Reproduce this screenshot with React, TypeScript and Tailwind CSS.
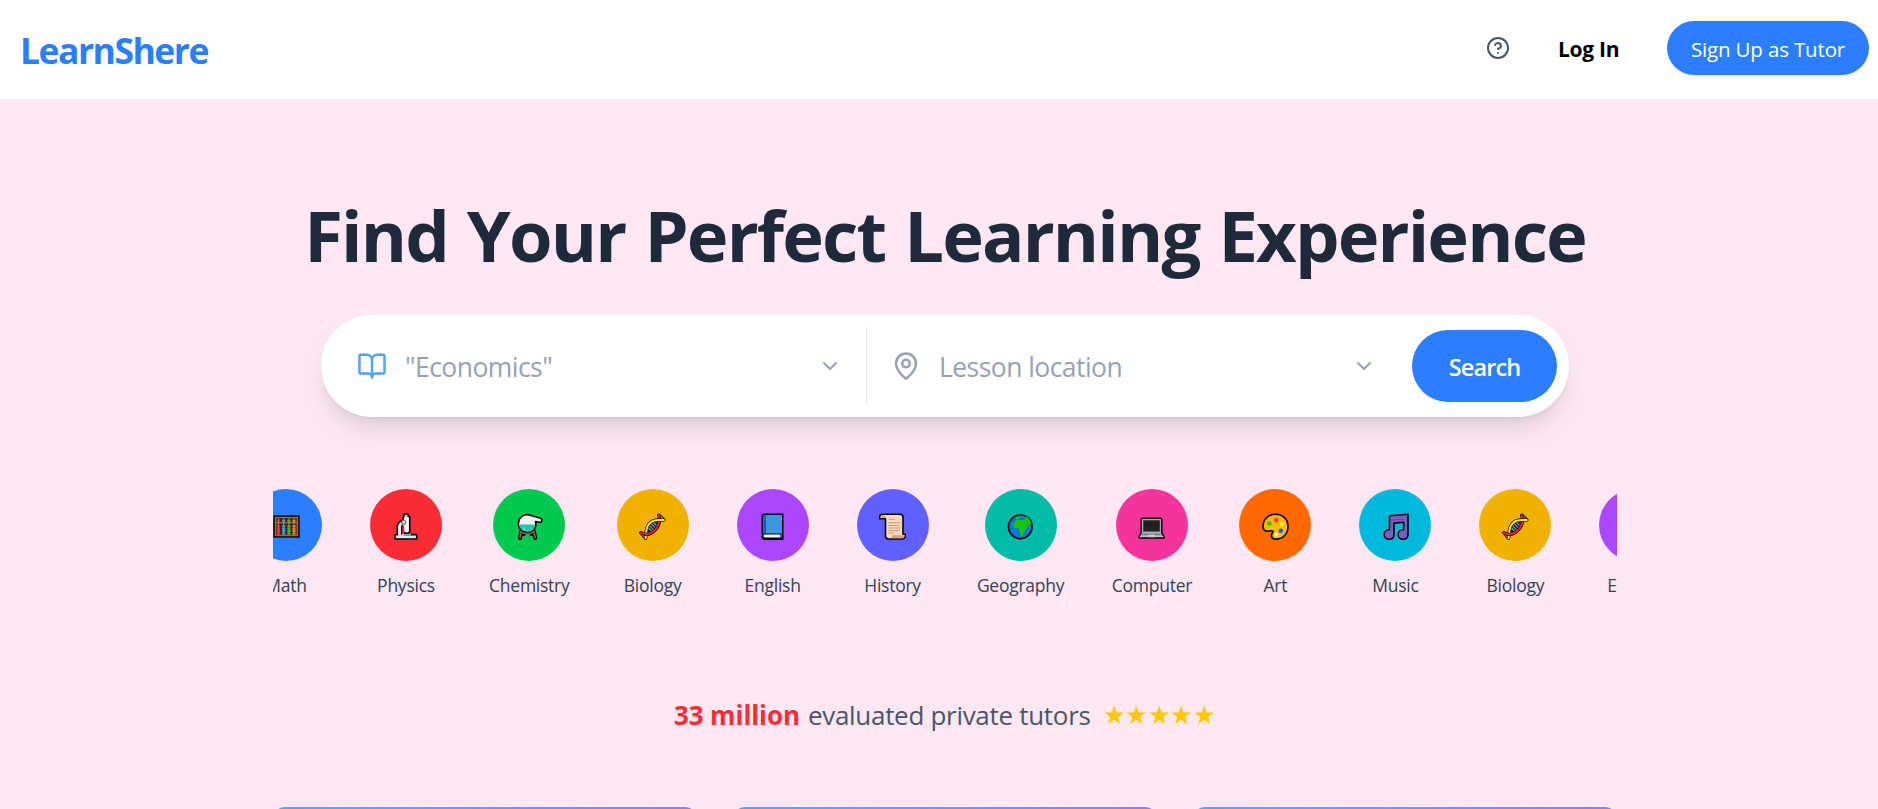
import React from "react";
import { BookOpen, MapPin, ChevronDown, CircleHelp } from "lucide-react";

const Abacus = () => (
  <svg width="27" height="27" viewBox="0 0 27 27">
    <rect x="0.3" y="2.3" width="26.4" height="22.4" fill="#0b0808" />
    <rect x="1.8" y="3.8" width="23.4" height="19.4" fill="#9a6a48" />
    <rect x="3.2" y="5.2" width="20.4" height="3.8" fill="#3a231a" />
    <rect x="3.2" y="10.4" width="20.4" height="11.4" fill="#3a231a" />
    <path d="M5.400 5.200v16.600M10.700 5.200v16.600M15.900 5.200v16.600M21 5.200v16.600" stroke="#d9b48f" strokeWidth=".7" />
    <path d="M5.4 6.800v2.200M5.400 12.300v9.500" stroke="#f0303f" strokeWidth="3.200" strokeDasharray="2 .4" />
    <path d="M10.700 6.800v2.200M10.700 12.300v9.500" stroke="#3b9ef0" strokeWidth="3.200" strokeDasharray="2 .4" />
    <path d="M15.900 6.800v2.200M15.900 12.300v9.500" stroke="#3bbf34" strokeWidth="3.200" strokeDasharray="2 .4" />
    <path d="M21 6.800v2.200M21 12.300v9.500" stroke="#f5812a" strokeWidth="3.200" strokeDasharray="2 .4" />
  </svg>
);

const Microscope = () => (
  <svg width="27" height="27" viewBox="0 0 27 27" strokeLinejoin="round">
    <path d="M11 1.2h4.200v2.200h1.600v15.400l-1.800 1.400h-2.600l-1-1v2.400H23.700v4.400H2v-4.400h2.400v-8.200C4.400 11 6.400 8.600 9 7.600l1.200-.6V3.400h.8z" fill="#cfd2d6" stroke="#050505" strokeWidth="1.600" />
    <path d="M11.400 4.500h4.300v13.200l-1.500 1.400h-1.700l-1.100-1.300z" fill="#f4f5f7" />
    <path d="M8 11.500v9.800H5.300v-7.500C5.300 12 6.300 10.800 8 9.800z" fill="#f1f2f4" />
    <path d="M9.500 12.500 11.200 13v7.500H8.600v-7z" fill="#fd2c36" />
    <path d="M8.700 21.600V14c0-1 .4-1.600 1.300-2" fill="none" stroke="#050505" strokeWidth="1.300" />
    <circle cx="10.800" cy="9.200" r="2" fill="#ddd" stroke="#777" strokeWidth="1.100" />
    <path d="M10.500 21.700h7.500" stroke="#5cc8f4" strokeWidth="1.400" />
    <path d="M3.200 24h19.400" stroke="#eceef1" strokeWidth="1.500" />
  </svg>
);

const Alembic = () => (
  <svg width="27" height="27" viewBox="0 0 27 27" strokeLinejoin="round" strokeLinecap="round">
    <path d="M5.500 17.500 4 25M8.800 19.500 7.600 21M17.600 17.500 19.300 25M14.500 19.500l1.100 1.500" stroke="#050505" strokeWidth="4" />
    <path d="M5.500 17.500 4 24.700M17.600 17.500 19.300 24.700" stroke="#8d5a35" strokeWidth="1.800" />
    <path d="M11 1.600c1.600 0 3.200.4 4.800 1.200l8.900 2.400c1.400.5 1.400 2.300.7 3.400-.4.7-1.300.8-2 .6l-4-.6c.4 1.200.5 2 .5 3 0 4.600-3.800 7.800-8.600 7.800s-9-3.300-9-8.600 3.800-9.200 8.700-9.200z" fill="#f2f3f5" stroke="#050505" strokeWidth="1.600" />
    <path d="M3.200 11.500h15.800c-.2 4.200-3.400 6.900-7.700 6.900s-7.700-2.500-8.100-6.900z" fill="#1cc8ad" />
    <path d="M8.500 14.500l-1 1.500 2.200 1" stroke="#94eadb" strokeWidth=".9" fill="none" />
    <path d="M4.800 18.900c3.800 2 8.900 2 13 0" stroke="#8d5a35" strokeWidth="1.700" fill="none" />
  </svg>
);

const Dna = () => (
  <svg width="27" height="27" viewBox="0 0 27 27" fill="none" strokeLinecap="round" strokeLinejoin="round">
    <path d="M2 19.800C7 22.600 12 20.800 15.500 17.500 20.500 13 21.500 8.500 19.800 2.200L24.800 7C20.500 7.500 16 5.500 11.500 9.500 6.500 14 7.500 18.500 6.600 25.200z" fill="#151a22" stroke="#050505" strokeWidth="3.200" />
    <path d="m20.800 3 3 3.200M2.800 20.800l3.200 3.400" stroke="#5aa2f7" strokeWidth="1.700" />
    <path d="m8.800 14.200 4.400 4.600M13.800 8.800l4.600 4.600" stroke="#5aa2f7" strokeWidth="1.300" />
    <path d="m10.300 12.300 4.600 4.800" stroke="#53c94c" strokeWidth="1.200" />
    <path d="m12 10.400 4.700 4.800" stroke="#a08be8" strokeWidth="1.200" />
    <path d="M2 19.800C7 22.600 12 20.800 15.500 17.500 20.500 13 21.500 8.500 19.800 2.200" stroke="#050505" strokeWidth="3" />
    <path d="M2 19.800C7 22.600 12 20.800 15.500 17.500 20.500 13 21.500 8.500 19.800 2.200" stroke="#e81b2c" strokeWidth="2.100" />
    <path d="M24.800 7C20.500 7.500 16 5.500 11.500 9.500 6.500 14 7.500 18.500 6.600 25.200" stroke="#050505" strokeWidth="3" />
    <path d="M24.800 7C20.500 7.500 16 5.500 11.500 9.500 6.500 14 7.500 18.500 6.600 25.200" stroke="#ffe52e" strokeWidth="2.100" />
    <path d="M3 20.300C7 22.200 11.500 20.800 14.500 18.400" stroke="#050505" strokeWidth="3" strokeLinecap="butt" />
    <path d="M2 19.800C7 22.600 12 20.800 15.500 17.500" stroke="#e81b2c" strokeWidth="2.100" />
  </svg>
);

const Book = () => (
  <svg width="27" height="27" viewBox="0 0 27 27">
    <path d="M5.500 0.500H24.500V27H5.500C3.500 27 2.500 25.800 2.500 24V3.500C2.500 1.500 3.700.5 5.500.5z" fill="#050505" />
    <path d="M6.500 2H23v18.500H6.500z" fill="#3e96df" />
    <path d="M6.500 2v18.500c-1 0-2 .6-2.500 1.700V4c0-1.400.9-2 2.500-2z" fill="#1769b8" />
    <path d="M6 21.500h15.500v3H6c-2 0-2-3 0-3z" fill="#f1f2f4" />
    <path d="M21.500 21h1.500v3.500h-1.500z" fill="#1769b8" />
  </svg>
);

const Scroll = () => (
  <svg width="27" height="27" viewBox="0 0 27 27" strokeLinejoin="round">
    <path d="M3.500 1.300H21c2 0 3 1 3 3v17h2.400c.2 2.800-.9 4.700-3 4.700H10c-2.200 0-3.500-1.200-3.500-3.500V5.800H.8C.2 3 1.200 1.300 3.500 1.300z" fill="#f9d9c3" stroke="#050505" strokeWidth="1.600" />
    <path d="M1.700 5C1.700 3 2.300 2.100 3.500 2.100c1.600 0 3 1 3 2.900z" fill="#d6a285" />
    <path d="M13 22.200h12.600c0 2-.8 3-2.100 3H11.500c1.200-.6 1.700-1.600 1.500-3z" fill="#d6a285" />
    <path d="M9.500 6.200h6.500M9.500 9.800H22M9.500 12.500h11M9.500 15H22M9.500 17.600H21M9.500 20h5" stroke="#c99779" strokeWidth="1" />
  </svg>
);

const Globe = () => (
  <svg width="27" height="27" viewBox="0 0 27 27">
    <circle cx="13.300" cy="13.800" r="11.800" fill="#0878df" stroke="#050505" strokeWidth="1.700" />
    <path d="M8.200 8.300 11 6.500l5.500.8 2.500-2-1.600-1.500 1.800-.4c2.800 1.500 4.500 4 5 7l-2.200 2-2.200-1.700 1.600 3.600-2.100.8-1.800 3.200-1.300 4.200-2.500.8-1.300-4.700-1-3.800-4 .4L5.800 12z" fill="#16c60c" />
    <path d="m9 4.500 3-1.300 1.200 1-1.700 1.500-2.500.7zM14.200 2.800l3 .3-1.700 1.500zM19.800 17.500l.9 1-1 2z" fill="#16c60c" />
  </svg>
);

const Laptop = () => (
  <svg width="27" height="27" viewBox="0 0 27 27" strokeLinejoin="round">
    <path d="M4.500 5.300h18c.9 0 1.300.5 1.300 1.300v13.100l2.300 4.200c.2.700-.1 1-.8 1H1.600c-.8 0-1-.5-.8-1l2.400-4.200V6.600c0-.8.5-1.300 1.300-1.300z" fill="#aaa7b0" stroke="#050505" strokeWidth="1.500" />
    <path d="M5.300 7.300h16.500v11.200H5.300z" fill="#1f1f1f" />
    <path d="m4 20.600-.9 1.400h21l-.8-1.400z" fill="#85818b" />
    <path d="M10.500 22.100h6l.6 1.700H9.900zM1.800 23.500h23.600" fill="#ddd" stroke="#c9c5cf" strokeWidth=".8" />
  </svg>
);

const Palette = () => (
  <svg width="27" height="27" viewBox="0 0 27 27">
    <path d="M13.600 1.200c7 0 12.400 5.200 12.400 12.200 0 7.400-5.200 12.700-11.500 12.700-3.200 0-5-1.600-5-3.700 0-2.300 2-3 1.500-4.200-.6-1.200-3-.1-5 0-2.800.1-5-1.300-5-4.800C1 6.600 6.400 1.200 13.600 1.200z" fill="#fdb90b" stroke="#050505" strokeWidth="1.600" />
    <circle cx="7.300" cy="10.400" r="2.200" fill="#16c60c" />
    <circle cx="14.200" cy="7" r="2.200" fill="#f03a17" />
    <circle cx="19.800" cy="11.200" r="2.200" fill="#ffe32a" />
    <circle cx="18.900" cy="17.800" r="2.200" fill="#0c63d8" />
    <circle cx="14.500" cy="21.800" r="2" fill="#fff6e0" />
  </svg>
);

const Notes = () => (
  <svg width="27" height="27" viewBox="0 0 27 27" strokeLinejoin="round">
    <path d="M7.500 2.800 26 1.200v20c0 3-2 5-5 5-2.900 0-4.900-2-4.900-4.700 0-2.800 2-4.800 4.800-4.800h.8V9.200l-9.700.9v11.400c0 2.800-2 4.700-4.800 4.700-3 0-5-2-5-4.700 0-2.700 2-4.800 4.700-4.800h.6z" fill="#7d5cc6" stroke="#050505" strokeWidth="1.600" />
    <path d="M8.500 7.300 22.500 6" stroke="#5b3fa0" strokeWidth=".8" />
  </svg>
);

type Subject = { label: string; color: string; width: string; Icon: () => React.JSX.Element };

const subjects: Subject[] = [
  { label: "Math", color: "bg-[#2b7fff]", width: "w-[72px]", Icon: Abacus },
  { label: "Physics", color: "bg-[#fb2c36]", width: "w-[72px]", Icon: Microscope },
  { label: "Chemistry", color: "bg-[#00c950]", width: "w-[78.6px]", Icon: Alembic },
  { label: "Biology", color: "bg-[#f0b100]", width: "w-[72px]", Icon: Dna },
  { label: "English", color: "bg-[#ad46ff]", width: "w-[72px]", Icon: Book },
  { label: "History", color: "bg-[#615fff]", width: "w-[72px]", Icon: Scroll },
  { label: "Geography", color: "bg-[#00bba7]", width: "w-[88px]", Icon: Globe },
  { label: "Computer", color: "bg-[#f6339a]", width: "w-[78.8px]", Icon: Laptop },
  { label: "Art", color: "bg-[#ff6900]", width: "w-[72px]", Icon: Palette },
  { label: "Music", color: "bg-[#00b8db]", width: "w-[72px]", Icon: Notes },
  { label: "Biology", color: "bg-[#f0b100]", width: "w-[72px]", Icon: Dna },
  { label: "English", color: "bg-[#ad46ff]", width: "w-[72px]", Icon: Book },
];

const Star = () => (
  <svg width="22.5" height="22" viewBox="0 0 22.5 22" className="shrink-0">
    <path d="M11.200 1.500 13.500 8.600H21L15 13l2.300 7.300-6.100-4.500-6.100 4.500L7.400 13 1.400 8.600h7.500z" fill="#fdc700" />
  </svg>
);

export default function App() {
  return (
    <div className="flex h-[809px] w-full flex-col overflow-hidden bg-[#fce7f3] font-['Open_Sans','Noto_Sans',sans-serif]">
      <header className="flex h-[99px] shrink-0 items-center justify-between bg-white pl-[20px] pr-[9px] pb-[3px]">
        <span className="pt-[3px] text-[35.5px] leading-[48px] font-bold tracking-[-1.5px] text-[#2b7fff]">LearnShere</span>
        <nav className="flex items-center">
          <CircleHelp size={24} className="text-[#4a5565]" />
          <a className="ml-[48px] w-[64px] pt-[3px] text-[21px] font-bold tracking-[-0.3px] whitespace-nowrap text-black">Log In</a>
          <button className="ml-[45px] h-[54px] w-[202px] rounded-full bg-[#2b7fff] pt-[3px] text-[20.5px] tracking-[-0.15px] whitespace-nowrap text-white">
            Sign Up as Tutor
          </button>
        </nav>
      </header>

      <main className="flex flex-1 flex-col items-center pl-[12px]">
        <h1 className="mt-[89px] h-[96px] text-[70.5px] leading-[95px] font-bold tracking-[-1.85px] [word-spacing:2.5px] whitespace-nowrap text-[#1e2939]">
          Find Your Perfect Learning Experience
        </h1>

        <div className="mt-[31px] flex h-[102px] w-[1248px] shrink-0 items-center rounded-full bg-white pr-[12px] pl-[36px] shadow-[0_15px_22px_-4px_rgba(0,0,0,0.1),0_6px_9px_-6px_rgba(0,0,0,0.1)]">
          <BookOpen size={30} className="text-[#51a2ff]" />
          <span className="ml-[18px] flex-1 pt-[4px] text-[26.5px] tracking-[-0.55px] text-[#99a1af]">"Economics"</span>
          <ChevronDown size={24} className="text-[#99a1af]" />
          <div className="mr-[24px] ml-[24px] h-[78px] w-px bg-[#e5e7eb]" />
          <MapPin size={30} className="text-[#99a1af]" />
          <span className="ml-[18px] flex-1 pt-[4px] text-[26.5px] tracking-[-0.55px] text-[#99a1af]">Lesson location</span>
          <ChevronDown size={24} className="mr-[36px] text-[#99a1af]" />
          <button className="h-[72px] w-[145px] rounded-full bg-[#2b7fff] pt-[4px] text-[23.5px] font-semibold tracking-[-0.85px] text-white">Search</button>
        </div>

        <div className="mt-[72px] flex w-[1344px] shrink-0 overflow-hidden">
          <div className="-ml-[23px] flex shrink-0 gap-[48px]">
            {subjects.map(({ label, color, width, Icon }, i) => (
              <div key={i} className={`flex shrink-0 flex-col items-center ${width}`}>
                <div className={`flex h-[72px] w-[72px] items-center justify-center rounded-full pt-[3px] ${color}`}>
                  <Icon />
                </div>
                <span className="mt-[11px] text-[17.5px] leading-[27px] tracking-[-0.25px] whitespace-nowrap text-[#364153]">{label}</span>
              </div>
            ))}
          </div>
        </div>

        <div className="mt-[95px] flex h-[42px] shrink-0 items-center text-[26px] whitespace-nowrap text-[#4a5565]">
          <span className="w-[126px] font-bold tracking-[-0.1px] text-[#fb2c36]">33 million</span>
          <span className="ml-[8px] tracking-[-0.3px]">evaluated private tutors</span>
          <span className="mr-px ml-[12px] flex">
            <Star /><Star /><Star /><Star /><Star />
          </span>
        </div>

        <div className="mt-[71px] grid w-[1344px] shrink-0 grid-cols-3 gap-[36px]">
          {[0, 1, 2].map((i) => (
            <div key={i} className="h-[240px] rounded-[12px] bg-linear-to-r from-[#51a2ff] to-[#927afb]" />
          ))}
        </div>
      </main>
    </div>
  );
}
